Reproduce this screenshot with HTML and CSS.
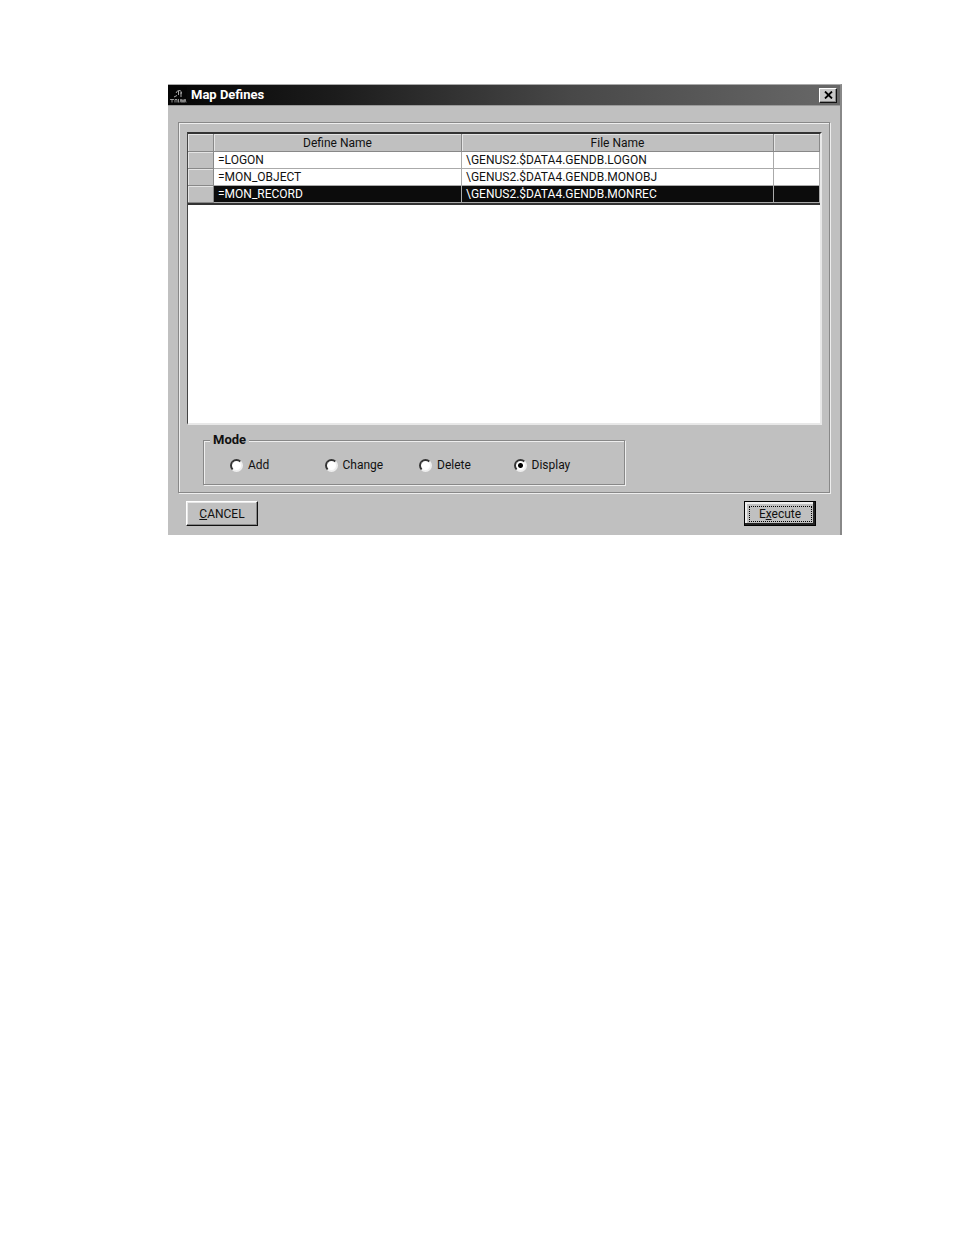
FILE: index.html
```html
<!DOCTYPE html>
<html lang="en">
<head>
<meta charset="utf-8">
<title>Map Defines</title>
<link rel="stylesheet" href="styles.css">
</head>
<body>
<main class="window">
  <header class="titlebar">
    <svg class="logo" viewBox="0 0 17 17" aria-hidden="true">
      <rect width="17" height="17" fill="#050505"/>
      <path d="M6 6Q7 3 10 3.500Q12.500 4.500 11 7M8.500 4V8M11 5V10M4 10L7 8.500" fill="none" stroke="#a8a8a8"/>
      <path d="M0 12.500H4M2 12V15.500M5 15.500V12.500H7V15.500M8.500 12V15.500M10 15.500L11 12L12 15.500L13 12.500L14 15.500L15 12L16 15.500" fill="none" stroke="#b5b5b5" stroke-width=".8"/>
    </svg>
    <h1 class="title">Map Defines</h1>
    <button class="close" type="button" aria-label="Close">
      <svg class="cross" viewBox="0 0 9 8" aria-hidden="true"><path d="M1 .5L8 7.500M8 .5L1 7.500" stroke="#000" stroke-width="1.800"/></svg>
    </button>
  </header>
  <form class="content">
    <section class="panel">
      <div class="grid">
        <table class="defines">
          <colgroup><col class="col-mark"><col class="col-define"><col class="col-file"><col class="col-rest"></colgroup>
          <thead>
            <tr><th></th><th>Define Name</th><th>File Name</th><th></th></tr>
          </thead>
          <tbody>
            <tr><th></th><td>=LOGON</td><td>\GENUS2.$DATA4.GENDB.LOGON</td><td></td></tr>
            <tr><th></th><td>=MON_OBJECT</td><td>\GENUS2.$DATA4.GENDB.MONOBJ</td><td></td></tr>
            <tr class="selected"><th></th><td>=MON_RECORD</td><td>\GENUS2.$DATA4.GENDB.MONREC</td><td></td></tr>
          </tbody>
        </table>
      </div>
      <fieldset class="mode">
        <legend>Mode</legend>
        <div class="options">
          <label class="option"><input type="radio" name="mode">Add</label>
          <label class="option"><input type="radio" name="mode">Change</label>
          <label class="option"><input type="radio" name="mode">Delete</label>
          <label class="option"><input type="radio" name="mode" checked>Display</label>
        </div>
      </fieldset>
    </section>
    <footer class="actions">
      <button class="button" type="button"><span><u>C</u>ANCEL</span></button>
      <button class="button default" type="button"><span class="focus">E<u>x</u>ecute</span></button>
    </footer>
  </form>
</main>
</body>
</html>
```
FILE: styles.css
```css
* { box-sizing: border-box; }

body {
  margin: 0;
  padding: 84px 112px 40px 168px;
  background: #fff;
  color: #111;
  font: 12px/16px Roboto, "Liberation Sans", sans-serif;
}

.window {
  background: #c0c0c0;
  border-top: 1px solid #aaa;
  border-right: 2px solid #888;
}

.titlebar {
  display: flex;
  align-items: center;
  height: 21px;
  padding: 0 3px 0 2px;
  background: linear-gradient(90deg, #050505, #1c1c1c 25%, #484848 60%, #686868);
  border-bottom: 1px solid #999;
}

.logo { width: 17px; height: 17px; }

.title {
  flex: 1;
  margin: 0 0 0 4px;
  color: #fff;
  font-size: 13px;
  font-weight: 700;
}

.close {
  display: grid;
  place-items: center;
  width: 18px;
  height: 15px;
  padding: 0;
  background: #c8c8c8;
  border: 1px solid;
  border-color: #fff #111 #111 #fff;
  box-shadow: inset -1px -1px #888;
}

.cross { width: 9px; height: 8px; }

.content { padding: 16px 10px 9px; }

.panel {
  padding: 9px 7px 7px 8px;
  border: 1px solid #888;
  box-shadow: 1px 1px #eee, inset 1px 1px #eee;
}

.grid {
  height: 293px;
  background: #fff;
  border: 2px solid;
  border-color: #333 #e8e8e8 #e8e8e8 #444;
  border-left-width: 1px;
}

.defines {
  width: 100%;
  table-layout: fixed;
  border-collapse: separate;
  border-spacing: 0;
  border-bottom: 2px solid #333;
}

.col-mark { width: 26px; }
.col-define { width: 248px; }
.col-rest { width: 46px; }

.defines th,
.defines td {
  height: 17px;
  padding: 0 4px;
  line-height: 16px;
  border-right: 1px solid #aaa;
  border-bottom: 1px solid #aaa;
  text-align: left;
  white-space: nowrap;
}

.defines th {
  background: #c0c0c0;
  border-color: #888;
  box-shadow: inset 1px 1px #e4e4e4;
  font-weight: 400;
  text-align: center;
}

.defines thead th {
  height: 18px;
  padding-top: 1px;
}

.selected td {
  background: #0c0c0c;
  color: #fff;
}

.mode {
  width: 422px;
  margin: 8px 0 0 16px;
  padding: 0 0 11px 26px;
  border: 1px solid #888;
  box-shadow: 1px 1px #eee, inset 1px 1px #eee;
}

.mode legend {
  margin-left: -20px;
  padding: 0 3px;
  background: #c0c0c0;
  font-size: 13px;
  line-height: 14px;
  font-weight: 700;
}

.options {
  display: grid;
  grid-template-columns: repeat(4, 1fr);
  padding: 10px 16px 0 0;
}

.option {
  display: flex;
  align-items: center;
  gap: 5px;
}

.option input {
  appearance: none;
  width: 13px;
  height: 13px;
  margin: 0;
  background: #fff;
  border: 2px solid;
  border-color: #333 #eee #eee #333;
  border-radius: 50%;
}

.option input:checked {
  background: radial-gradient(circle, #000 2px, #fff 3px);
}

.actions {
  display: flex;
  justify-content: space-between;
  padding: 8px 14px 0 8px;
}

.button {
  display: flex;
  align-items: center;
  justify-content: center;
  width: 72px;
  height: 25px;
  padding: 0;
  background: #c0c0c0;
  border: 1px solid;
  border-color: #fff #111 #111 #fff;
  box-shadow: inset -1px -1px #888, inset 1px 1px #e8e8e8;
  color: #111;
  font: inherit;
}

.default {
  border: 1px solid #000;
  box-shadow: inset -2px -2px #222, inset 2px 2px #eee;
}

.default .focus {
  width: 63px;
  border: 1px dotted #000;
  line-height: 14px;
}
```
